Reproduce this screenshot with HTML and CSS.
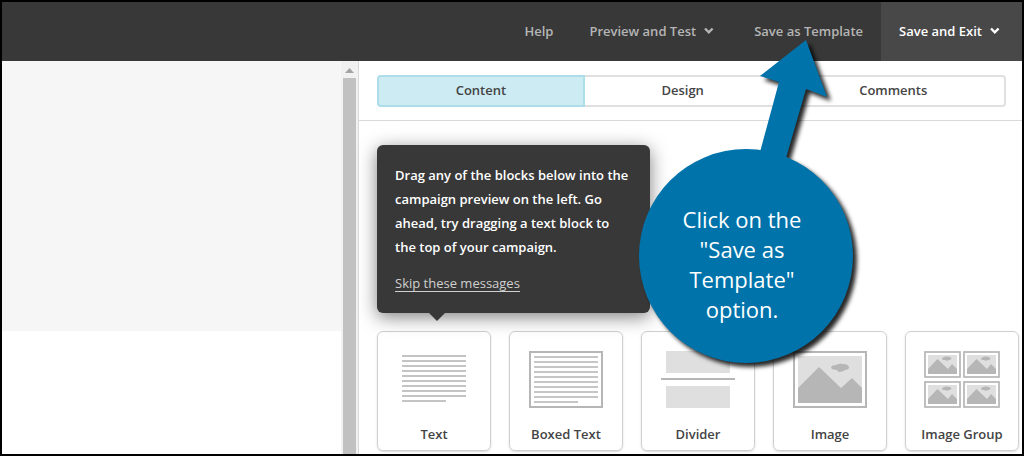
FILE: index.html
```html
<!DOCTYPE html>
<html lang="en">
	<head>
		<meta charset="UTF-8">
		<meta name="viewport" content="width=device-width, initial-scale=1.0">

		<title>Campaign Editor</title>

		<link rel="stylesheet" href="styles.css">
	</head>
	<body>
		<!--Top toolbar-->
		<header class="topbar">
			<button type="button" class="nav-btn">Help</button>
			<button type="button" class="nav-btn">Preview and Test
				<svg class="chevron" width="14" height="8" viewBox="0 0 14 8"><path d="M1 1.5 L4.8 5.3 L8.6 1.5"/></svg>
			</button>
			<button type="button" class="nav-btn">Save as Template</button>
			<button type="button" class="nav-btn save-exit">Save and Exit
				<svg class="chevron" width="14" height="8" viewBox="0 0 14 8"><path d="M1 1.5 L4.8 5.3 L8.6 1.5"/></svg>
			</button>
		</header>

		<main class="editor">
			<!--Campaign preview-->
			<section class="preview">
				<div class="preview-header"></div>
			</section>
			<div class="scrollbar">
				<svg width="9" height="5" viewBox="0 0 9 5"><path d="M0 5 L4.5 0 L9 5 Z" fill="#a3a3a3"/></svg>
				<div class="thumb"></div>
			</div>

			<!--Blocks panel-->
			<section class="panel">
				<nav class="tabs">
					<button type="button" class="tab active">Content</button>
					<button type="button" class="tab">Design</button>
					<button type="button" class="tab">Comments</button>
				</nav>
				<div class="panel-body">
					<div class="tip">
						<p>Drag any of the blocks below into the campaign preview on the left. Go ahead, try dragging a text block to the top of your campaign.</p>
						<a href="#">Skip these messages</a>
					</div>

					<div class="blocks">
						<div class="block">
							<svg width="74" height="57" viewBox="0 0 74 57">
								<path d="M5 5h64M5 10h64M5 15h64M5 20h64M5 25h64M5 30h64M5 35h64M5 40h64M5 45h64M5 50h44" stroke="#c4c4c4" stroke-width="2"/>
							</svg>
							<span>Text</span>
						</div>
						<div class="block">
							<svg width="74" height="57" viewBox="0 0 74 57">
								<rect x="1" y="1" width="72" height="55" fill="none" stroke="#b6b6b6" stroke-width="2"/>
								<path d="M5 6h64M5 11h64M5 16h64M5 21h64M5 26h64M5 31h64M5 36h64M5 41h64M5 46h64M5 51h44" stroke="#c6c6c6" stroke-width="2"/>
							</svg>
							<span>Boxed Text</span>
						</div>
						<div class="block">
							<svg width="74" height="57" viewBox="0 0 74 57">
								<path d="M5 0h64v22h-64zM5 35h64v22h-64z" fill="#dfdfdf"/>
								<path d="M0 28h74" stroke="#b6b6b6" stroke-width="2"/>
							</svg>
							<span>Divider</span>
						</div>
						<div class="block">
							<svg width="74" height="57" viewBox="0 0 74 57">
								<rect x="1" y="1" width="72" height="55" fill="none" stroke="#b6b6b6" stroke-width="2"/>
								<rect x="5" y="5" width="64" height="47" fill="#dfdfdf"/>
								<path d="M5 37 L26 16 L48 37 L59 27 L69 37 V52 H5 Z" fill="#b6b6b6"/>
								<path d="M38 16 Q39 14 43 14 Q46 12 50 13 Q55 13 56 16 Q56 19 52 19 Q50 21 46 21 Q44 20 44 19 Q38 19 38 16 Z" fill="#b6b6b6"/>
							</svg>
							<span>Image</span>
						</div>
						<div class="block">
							<svg width="76" height="57" viewBox="0 0 76 57">
								<defs>
									<g id="thumbnail">
										<rect x="1" y="1" width="35" height="25" fill="none" stroke="#b6b6b6" stroke-width="1.7"/>
										<rect x="4" y="4" width="29" height="19" fill="#dfdfdf"/>
										<path d="M4 18 L13.5 8 L24 18 L28 13 L33 18 V23 H4 Z" fill="#b6b6b6"/>
										<path d="M18 7.5 Q19 6 22 5.5 Q27 5.5 27.5 7.5 Q27 9 25 9 Q23 10.5 21 9 Q18 9 18 7.5 Z" fill="#b6b6b6"/>
									</g>
								</defs>
								<use href="#thumbnail"/>
								<use href="#thumbnail" x="39"/>
								<use href="#thumbnail" y="30"/>
								<use href="#thumbnail" x="39" y="30"/>
							</svg>
							<span>Image Group</span>
						</div>
					</div>
				</div>
			</section>
		</main>

		<!--Callout pointing at the Save as Template button-->
		<aside class="callout">
			<svg class="callout-shape" width="214" height="324" viewBox="0 0 214 324">
				<circle cx="107" cy="217" r="107"/>
				<path d="M167 1 L188 58 L167 50 L147 119 L134 170 L108 170 L121 113 L140 43 L121 37 Z"/>
			</svg>
			<p>Click on the<br>"Save as<br>Template"<br>option.</p>
		</aside>
	</body>
</html>
```
FILE: styles.css
```css
* {
	box-sizing: border-box;
}

body
{
	position: relative;
	display: flex;
	flex-direction: column;
	height: 100vh;
	margin: 0;
	border: 2px solid #000;
	overflow: hidden;
	background: #fff;
	color: #444;
	font-family: "Open Sans", "Noto Sans", sans-serif;
	font-size: 13px;
	font-weight: 600;
	line-height: 20px;
}

button{
	border: 0;
	background: none;
	color: inherit;
	font: inherit;
	cursor: pointer;
}

p{
	margin: 0;
}

/* Top toolbar */
.topbar{
	display: flex;
	flex: none;
	justify-content: flex-end;
	height: 59px;
	background: #383838;
	color: #b5b5b5;
}

.nav-btn{
	display: flex;
	align-items: center;
	gap: 8px;
	padding: 0 18px 2px;
}

.save-exit{
	background: #484848;
	color: #fff;
}

.chevron{
	fill: none;
	stroke: currentColor;
	stroke-width: 2.4;
}

/* Campaign preview on the left, blocks panel on the right */
.editor{
	display: flex;
	flex: 1;
	min-height: 0;
}

.preview{
	flex: 1;
}

.preview-header{
	height: 270px;
	background: #f6f6f6;
}

.scrollbar{
	display: flex;
	flex-direction: column;
	align-items: center;
	gap: 5px;
	width: 17px;
	padding-top: 7px;
	background: #f1f1f1;
}

.thumb{
	flex: 1;
	width: 13px;
	background: #c1c1c1;
}

.panel{
	flex: 0 0 664px;
	border-left: 1px solid #d9d9d9;
}

.tabs{
	display: flex;
	padding: 14px 16px 13px 18px;
	border-bottom: 1px solid #d9d9d9;
}

.tab{
	flex: 1 1 auto;
	height: 32px;
	padding: 0 6px 2px;
	border: 2px solid #e0e0e0;
	border-left: 0;
}

.tab:last-child{
	border-radius: 0 4px 4px 0;
}

.tab.active{
	border: 2px solid #acdde9;
	border-radius: 4px 0 0 4px;
	background: #cdebf2;
}

.panel-body{
	padding: 24px 0 0 18px;
}

/* Dark message with an arrow at the bottom */
.tip{
	position: relative;
	width: 273px;
	padding: 18px;
	border-radius: 6px;
	background: #383838;
	box-shadow: 0 4px 18px rgba(0, 0, 0, 0.5);
	color: #fff;
	line-height: 24px;
}

.tip::after{
	content: "";
	position: absolute;
	top: 100%;
	left: 52px;
	border: 8px solid transparent;
	border-top-color: #383838;
	border-bottom: 0;
}

.tip p{
	margin-bottom: 12px;
}

.tip a{
	display: inline-block;
	height: 18px;
	margin: 3px 0;
	border-bottom: 1px solid #d0d0d0;
	color: #d0d0d0;
	font-weight: 400;
	line-height: 18px;
	text-decoration: none;
	vertical-align: top;
}

.blocks{
	display: grid;
	grid-template-columns: repeat(auto-fill, 114px);
	gap: 18px;
	margin-top: 18px;
}

.block{
	display: flex;
	flex-direction: column;
	align-items: center;
	gap: 16px;
	padding: 19px 0 6px;
	border: 1px solid #d0d0d0;
	border-radius: 6px;
	box-shadow: 0 1px 2px rgba(0, 0, 0, 0.15);
	cursor: move;
}

/* Callout over the editor */
.callout{
	position: absolute;
	top: 37px;
	right: 169px;
	width: 214px;
	height: 324px;
	padding-top: 165px;
	color: #fff;
	font-size: 22px;
	font-weight: 400;
	line-height: 30px;
	text-align: center;
}

.callout-shape{
	position: absolute;
	top: 0;
	left: 0;
	overflow: visible;
	fill: #0073ab;
	filter: drop-shadow(4px 4px 2px rgba(0, 0, 0, 0.85));
}

.callout p{
	position: relative;
	padding-right: 8px;
}
```
